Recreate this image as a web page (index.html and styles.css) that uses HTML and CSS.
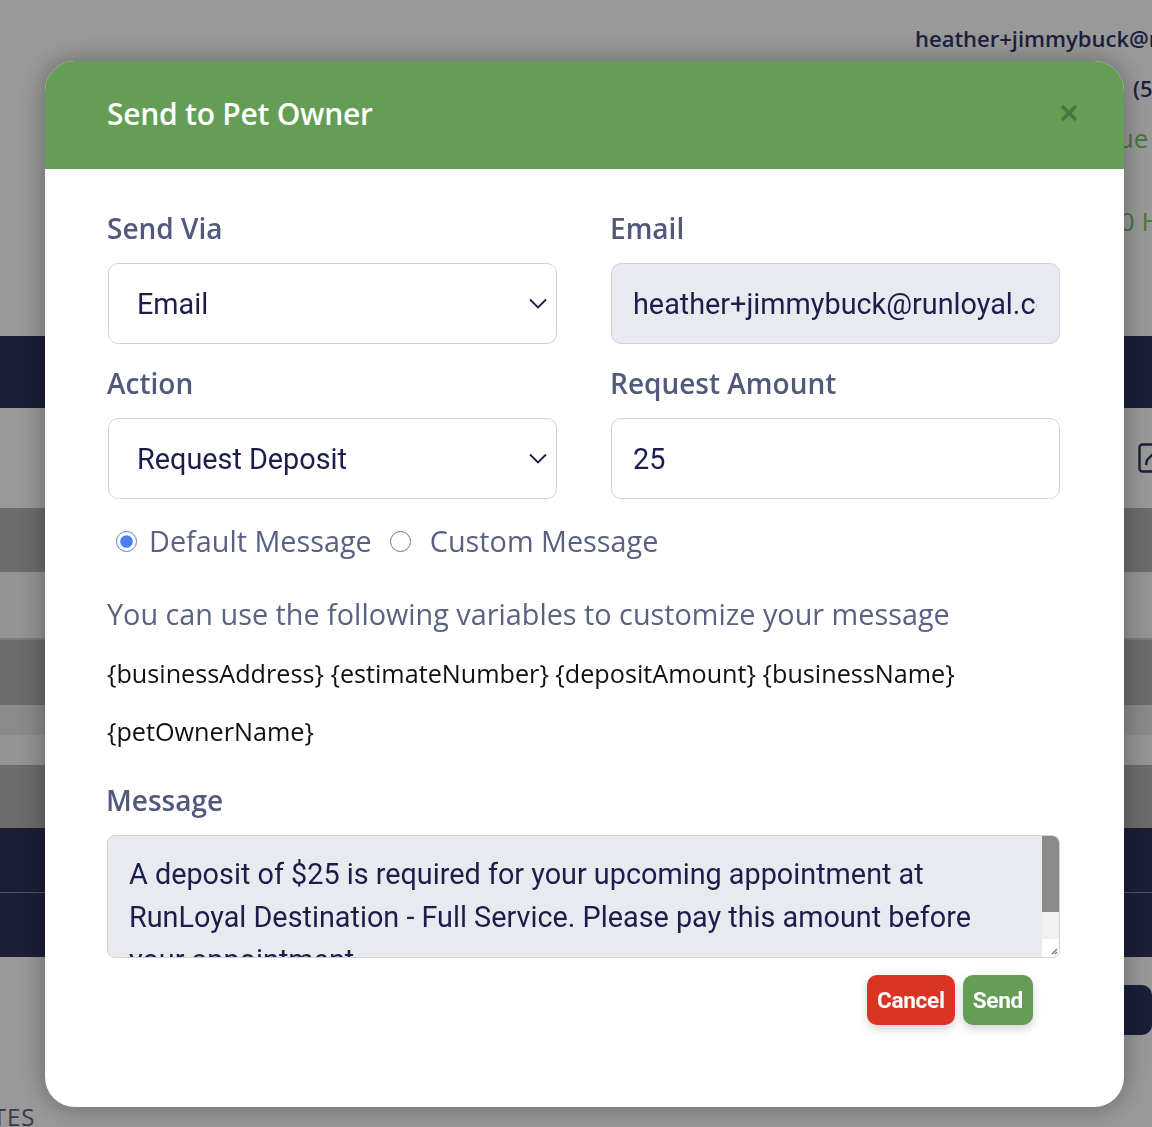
FILE: index.html
```html
<!DOCTYPE html>
<html>
    <head>
        <meta charset="utf-8">
        <title>Send to Pet Owner</title>
        <link rel="stylesheet" href="styles.css">
    </head>
    <body>
        <div class="page">
            <div class="page-top">
                <div class="owner-info">
                    <div class="owner-email">heather+jimmybuck@runloyal.com</div>
                    <div class="owner-phone">(555) 555-0142</div>
                    <div class="owner-status">Due</div>
                    <div class="owner-hours">10 Hours</div>
                </div>
            </div>
            <div class="band band-navy"></div>
            <div class="band band-tools">
                <span class="edit-icon">
                    <svg width="22" height="30" viewBox="0 0 22 30" fill="none" stroke="currentColor" stroke-width="2.4">
                        <rect x="1.5" y="1.5" width="26" height="27" rx="3"/>
                        <path d="M8 22 L9 17 L19 7"/>
                    </svg>
                </span>
            </div>
            <div class="band band-head"></div>
            <div class="band band-row"></div>
            <div class="band band-line"></div>
            <div class="band band-head band-head2"></div>
            <div class="band band-sub"></div>
            <div class="band band-row band-row2"></div>
            <div class="band band-head band-head3"></div>
            <div class="band band-navy band-navy2"></div>
            <div class="band band-navy band-navy3"></div>
            <div class="band band-actions">
                <span class="bg-btn bg-btn-green"></span>
                <span class="bg-btn bg-btn-navy"></span>
            </div>
            <div class="band band-notes"><span class="notes-title">NOTES</span></div>
        </div>

        <div class="overlay">
            <div class="modal">
                <div class="modal-header">
                    <h2 class="modal-title">Send to Pet Owner</h2>
                    <button class="modal-close" aria-label="Close">
                        <svg width="18" height="18" viewBox="0 0 18 18" stroke="currentColor" stroke-width="3.6">
                            <path d="M2 2 L16 16 M16 2 L2 16"/>
                        </svg>
                    </button>
                </div>

                <div class="modal-body">
                    <div class="form-grid">
                        <div class="field">
                            <label class="field-label">Send Via</label>
                            <div class="control select">
                                <span class="control-value">Email</span>
                                <svg class="chevron" width="18" height="11" viewBox="0 0 18 11" fill="none" stroke="currentColor" stroke-width="1.8">
                                    <path d="M1 1.5 L9 9.5 L17 1.5"/>
                                </svg>
                            </div>
                        </div>
                        <div class="field">
                            <label class="field-label">Email</label>
                            <div class="control control-readonly">
                                <span class="control-value">heather+jimmybuck@runloyal.com</span>
                            </div>
                        </div>
                        <div class="field">
                            <label class="field-label">Action</label>
                            <div class="control select">
                                <span class="control-value">Request Deposit</span>
                                <svg class="chevron" width="18" height="11" viewBox="0 0 18 11" fill="none" stroke="currentColor" stroke-width="1.8">
                                    <path d="M1 1.5 L9 9.5 L17 1.5"/>
                                </svg>
                            </div>
                        </div>
                        <div class="field">
                            <label class="field-label">Request Amount</label>
                            <div class="control control-amount">
                                <span class="control-value">25</span>
                            </div>
                        </div>
                    </div>

                    <div class="radio-row">
                        <label class="radio radio-default"><input type="radio" name="msgtype" checked> Default Message</label>
                        <label class="radio radio-custom"><input type="radio" name="msgtype"> Custom Message</label>
                    </div>

                    <p class="hint">You can use the following variables to customize your message</p>
                    <p class="vars">{businessAddress} {estimateNumber} {depositAmount} {businessName} {petOwnerName}</p>

                    <label class="field-label message-label">Message</label>
                    <div class="message-box">
                        <div class="message-text">A deposit of $25 is required for your upcoming appointment at RunLoyal Destination - Full Service. Please pay this amount before your appointment.</div>
                        <div class="scrollbar">
                            <div class="scroll-thumb"></div>
                            <div class="scroll-track"></div>
                            <div class="scroll-resizer">
                                <svg width="8" height="8" viewBox="0 0 8 8" stroke="#777" stroke-width="1.4">
                                    <path d="M7 2 L2 7 M7 5 L5 7"/>
                                </svg>
                            </div>
                        </div>
                    </div>

                    <div class="actions">
                        <button class="btn btn-cancel">Cancel</button>
                        <button class="btn btn-send">Send</button>
                    </div>
                </div>
            </div>
        </div>
    </body>
</html>
```

FILE: styles.css
```css
* {
  box-sizing: border-box;
}

html,
body {
  margin: 0;
  height: 100%;
}

body {
  background: #fff;
  font-family: "Open Sans", sans-serif;
  overflow: hidden;
}

/* page behind the modal */

.page {
  width: 1152px;
}

.page-top {
  height: 336px;
  padding-top: 13px;
}

.owner-info {
  margin-left: 915px;
  color: #30366a;
  font-size: 22px;
  font-weight: 600;
  line-height: 50px;
  white-space: nowrap;
}

.owner-phone {
  padding-left: 218px;
}

.owner-status,
.owner-hours {
  color: #7cc667;
  font-weight: 400;
  font-size: 26px;
}

.owner-status {
  padding-left: 184px;
}

.owner-hours {
  padding-left: 190px;
  margin-top: 33px;
}

.band {
  height: 64px;
}

.band-navy {
  background: #2c345d;
  height: 72px;
}

.band-tools {
  height: 100px;
  background: #fff;
  display: flex;
  align-items: center;
  padding-left: 1138px;
  color: #2c345d;
}

.edit-icon {
  display: flex;
}

.band-head {
  background: #b4b4b4;
}

.band-row {
  background: #f7f7f7;
  height: 66px;
}

.band-line {
  height: 2px;
  background: #d0d0d0;
}

.band-head2 {
  height: 65px;
}

.band-sub {
  height: 30px;
  background: #e6e6e6;
}

.band-row2 {
  height: 30px;
}

.band-head3 {
  height: 63px;
}

.band-navy2 {
  height: 65px;
  border-bottom: 1px solid #8a90a8;
}

.band-navy3 {
  height: 64px;
}

.band-actions {
  height: 117px;
  background: #fff;
  display: flex;
  gap: 8px;
  padding: 28px 0 0 1060px;
}

.bg-btn {
  display: block;
  width: 72px;
  height: 50px;
  border-radius: 10px;
}

.bg-btn-green {
  background: #649d54;
}

.bg-btn-navy {
  background: #2c345d;
}

.band-notes {
  height: 52px;
  background: #fff;
  padding-top: 28px;
  overflow: hidden;
}

.notes-title {
  display: block;
  margin-left: -46px;
  color: #5c6479;
  font-size: 24px;
  letter-spacing: 1px;
  line-height: 30px;
}

/* modal */

.overlay {
  position: fixed;
  inset: 0;
  background: rgba(0, 0, 0, 0.4);
  padding: 61px 0 0 45px;
}

.modal {
  width: 1079px;
  height: 1046px;
  background: #fff;
  border-radius: 30px;
  overflow: hidden;
  box-shadow: 0 0 28px rgba(0, 0, 0, 0.35);
}

.modal-header {
  height: 108px;
  background: #649d54;
  display: flex;
  align-items: center;
  justify-content: space-between;
  padding: 0 46px 4px 62px;
}

.modal-title {
  margin: 0;
  color: #fff;
  font-size: 30px;
  font-weight: 600;
  letter-spacing: -0.25px;
}

.modal-close {
  border: 0;
  background: none;
  padding: 0;
  color: #4a7640;
  display: flex;
}

.modal-body {
  padding: 40px 64px 0 62px;
}

.form-grid {
  display: grid;
  grid-template-columns: 449px 449px;
  column-gap: 54px;
  row-gap: 20px;
  padding-left: 1px;
}

.field-label {
  display: block;
  color: #525a7b;
  font-size: 28px;
  font-weight: 600;
  line-height: 38px;
  margin: 0 0 16px -1px;
}

.control {
  height: 81px;
  border: 1px solid #cfd2d9;
  border-radius: 10px;
  display: flex;
  align-items: center;
  padding: 0 9px 0 28px;
  color: #1b1e4b;
  font-family: Roboto, sans-serif;
  font-size: 28.8px;
}

.control-value {
  flex: 1;
  overflow: hidden;
  white-space: nowrap;
}

.chevron {
  color: #1b1e4b;
  flex: none;
}

.control-readonly {
  background: #e9eaef;
  padding: 0 22px 0 21px;
}

.control-amount {
  padding-left: 21px;
}

.radio-row {
  display: flex;
  align-items: center;
  height: 38px;
  margin-top: 23px;
  padding-left: 9px;
}

.radio {
  display: flex;
  align-items: center;
  color: #596182;
  font-size: 28.8px;
  line-height: 38px;
}

.radio input {
  width: 21px;
  height: 21px;
  margin: 0 12px 0 0;
  accent-color: #4a7df6;
}

.radio-custom {
  margin-left: 18px;
}

.radio-custom input {
  margin-right: 19px;
}

.hint {
  margin: 35px 0 0;
  color: #5a6283;
  font-size: 28.8px;
  line-height: 38px;
}

.vars {
  margin: 11px 0 0;
  color: #111;
  font-size: 25.2px;
  line-height: 58px;
}

.message-label {
  margin-top: 21px;
}

.message-box {
  display: flex;
  height: 123px;
  border: 1px solid #cfd2d9;
  border-radius: 8px;
  background: #e9eaef;
  overflow: hidden;
}

.message-text {
  flex: 1;
  padding: 17px 20px 0 21px;
  color: #1b1e4b;
  font-family: Roboto, sans-serif;
  font-size: 28.8px;
  line-height: 43px;
}

.scrollbar {
  width: 17px;
  display: flex;
  flex-direction: column;
}

.scroll-thumb {
  height: 76px;
  background: #8a8a8a;
}

.scroll-track {
  flex: 1;
  background: #f1f1f1;
}

.scroll-resizer {
  height: 18px;
  background: #fff;
  display: flex;
  align-items: flex-end;
  justify-content: flex-end;
  padding: 0 1px 2px 0;
}

.actions {
  display: flex;
  justify-content: flex-end;
  gap: 8px;
  margin-top: 17px;
  padding-right: 27px;
}

.btn {
  height: 50px;
  border: 0;
  border-radius: 10px;
  padding: 0 10px;
  color: #fff;
  font-family: Roboto, sans-serif;
  font-size: 22.6px;
  font-weight: 700;
  letter-spacing: -0.3px;
  box-shadow: 0 4px 10px rgba(0, 0, 0, 0.18);
  cursor: pointer;
}

.btn-cancel {
  background: #dc3422;
}

.btn-send {
  background: #649d54;
}
```
